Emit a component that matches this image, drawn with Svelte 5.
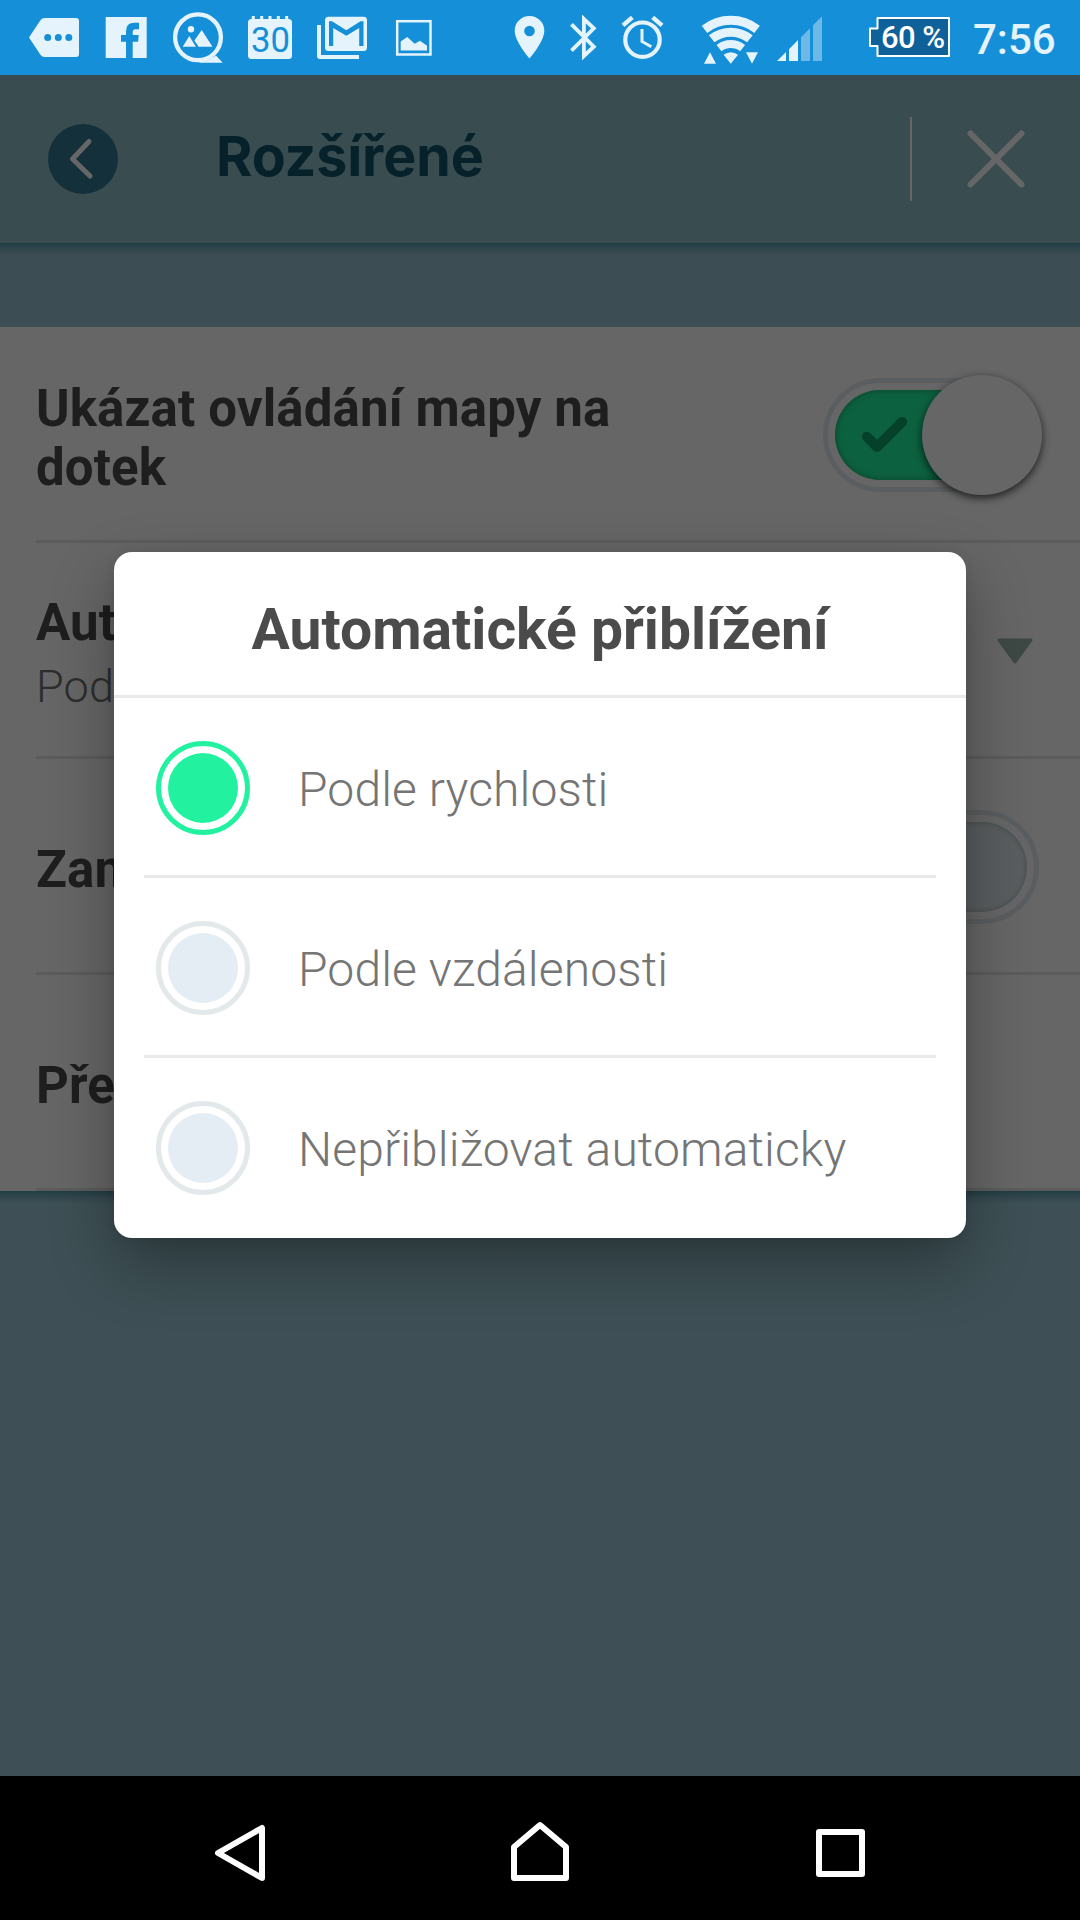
<script lang="ts">
  interface Option {
    id: string;
    label: string;
  }

  const options: Option[] = [
    { id: 'speed', label: 'Podle rychlosti' },
    { id: 'distance', label: 'Podle vzdálenosti' },
    { id: 'off', label: 'Nepřibližovat automaticky' }
  ];

  let selected = $state('speed');
  let showControls = $state(true);
</script>

<div class="screen">
  <div class="statusbar">
    <div class="notifications">
      <svg viewBox="0 0 72 75">
        <path d="M11 37.5 22.6 20q1.5-2 4-2H58q3 0 3 3v33q0 3-3 3H26.600q-2.500 0-4-2z" />
        <g class="cut">
          <circle cx="29.700" cy="37.500" r="3.500" />
          <circle cx="40.300" cy="37.500" r="3.500" />
          <circle cx="50.800" cy="37.500" r="3.500" />
        </g>
      </svg>
      <svg viewBox="0 0 72 75">
        <path d="M15.700 17h41v41h-41z" />
        <path class="cut" d="M36 58V41.700h-5V35h5v-4q0-8.300 8.500-8.300H49v6.600h-4q-2.300 0-2.300 2.500V35h6l-.6 6.700h-5.400V58z" />
      </svg>
      <svg viewBox="0 0 72 75">
        <circle class="line" cx="36" cy="37.300" r="22.900" stroke-width="4.300" />
        <path d="M36 62.700h24.700L54 55.500 46 60z" />
        <circle cx="29" cy="29.300" r="3.200" />
        <path d="m20.700 46.700 6.600-10.600 6.600 10.600zM36.600 46.700l-4.200-6.200L39.700 30l10.800 16.700z" />
      </svg>
      <svg viewBox="0 0 72 75">
        <rect x="14" y="19" width="44" height="40" rx="3.500" />
        <path class="line" stroke-width="3" d="M19.300 16v5M27.700 16v5M36 16v5M44.300 16v5M52.700 16v5" />
        <text class="cut day" x="17" y="52" textLength="39" lengthAdjust="spacingAndGlyphs">30</text>
      </svg>
      <svg viewBox="0 0 72 75">
        <rect x="19" y="16.700" width="42" height="34.300" rx="3.500" />
        <path d="M11 25h4v30h38v4H14q-3 0-3-3z" />
        <path class="cut" d="M23 46V21.200h3l14.300 9 14.200-9h3V46h-4.300V28L40.300 35.800 27.200 28v18z" />
      </svg>
      <svg viewBox="0 0 72 75">
        <rect class="line" x="19.200" y="21.200" width="33.300" height="33.300" stroke-width="2.500" />
        <path d="m22.700 41.500 6.600-4.500 7.400 6.700 5.300-3 7 5v4.900H22.700z" />
      </svg>
    </div>

    <div class="system">
      <svg viewBox="503 0 54 75" width="54">
        <path fill-rule="evenodd" d="M529.500 16a14.800 14.800 0 0 0-14.800 14.800c0 11 14.800 27.700 14.800 27.700s14.800-16.700 14.800-27.700A14.800 14.800 0 0 0 529.500 16zm0 9.700a5.300 5.300 0 1 1 0 10.600 5.300 5.300 0 0 1 0-10.600z" />
      </svg>
      <svg viewBox="557 0 54 75" width="54">
        <path class="line" stroke-width="3.800" d="m571.500 24.300 22.300 22.400-9.900 9.300V19l9.900 9.300-22.300 22.400" />
      </svg>
      <svg viewBox="611 0 63 75" width="63">
        <circle class="line" cx="642.500" cy="39.700" r="17.200" stroke-width="4.200" />
        <path class="line" stroke-width="4.400" d="m623 25.400 9.300-8M662 25.400l-9.300-8" />
        <path class="line" stroke-width="3" d="M642 29v12.500l9.300 5.300" />
      </svg>
      <svg viewBox="674 0 98 75" width="98">
        <path class="line" stroke-width="9" d="M704.500 29.400a42.800 42.800 0 0 1 52.600 0M711.700 38.700a31.100 31.100 0 0 1 38.200 0" />
        <path class="line" stroke-width="8" d="M719 48.100a19.200 19.200 0 0 1 23.600 0" />
        <path d="m730.800 63.700-7.200-9a11.400 11.400 0 0 1 14.400 0zM704 63.700l6-11.400 6 11.400zM746 52.300h12l-6 11.400z" />
      </svg>
      <svg viewBox="772 0 55 75" width="55">
        <path d="m777 61 9-9v9zM789 61V49.300l9-9.300v21z" />
        <path opacity="0.420" d="M801 61V37.300l9-9V61zM813 61V25.300l9-9V61z" />
      </svg>
      <svg class="battery" viewBox="863 0 92 75" width="92">
        <path d="M877.500 18H949v38h-71.500V46H870V28.500h7.500z" />
        <text x="881" y="48.200" textLength="64">60 %</text>
      </svg>
      <span class="clock">7:56</span>
    </div>
  </div>

  <main class="app">
    <header>
      <button class="back" aria-label="Zpět">
        <svg viewBox="0 0 70 70"><path d="M41 17.500 24.500 35 42 52" /></svg>
      </button>
      <h1>Rozšířené</h1>
      <button class="close" aria-label="Zavřít">
        <svg viewBox="0 0 60 60"><path d="m4.500 4.500 51 51M55.500 4.500l-51 51" /></svg>
      </button>
    </header>

    <section class="settings">
      <div class="row">
        <div class="name">Ukázat ovládání mapy na dotek</div>
        <button
          class="switch"
          class:on={showControls}
          aria-label="Ukázat ovládání"
          onclick={() => (showControls = !showControls)}
        >
          <span class="track">
            <svg viewBox="0 0 60 60"><path d="m15 29.700 10 10.300 25-25" /></svg>
          </span>
          <span class="thumb"></span>
        </button>
      </div>
      <div class="row">
        <div class="name">
          Automatické přiblížení
          <small>Podle rychlosti</small>
        </div>
        <svg class="arrow" viewBox="0 0 36 26"><path d="M2 2h32L18 24z" /></svg>
      </div>
      <div class="row">
        <div class="name">Zamknout</div>
        <span class="switch">
          <span class="track"></span>
          <span class="thumb"></span>
        </span>
      </div>
      <div class="row">
        <div class="name">Přehrát</div>
      </div>
    </section>

    <div class="overlay">
      <div class="dialog" role="dialog" aria-labelledby="dialog-title">
        <h2 id="dialog-title">Automatické přiblížení</h2>
        <div class="options">
          {#each options as option (option.id)}
            <label class="option" class:checked={selected === option.id}>
              <input type="radio" name="zoom" value={option.id} bind:group={selected} />
              <span class="radio"></span>
              <span class="label">{option.label}</span>
            </label>
          {/each}
        </div>
      </div>
    </div>
  </main>

  <nav class="navbar">
    <svg viewBox="0 0 70 70"><path d="M57 10v50L13 35z" /></svg>
    <svg viewBox="0 0 70 70"><path d="M9 60V29L35 7l26 22v31z" /></svg>
    <svg viewBox="0 0 70 70"><path d="M14 14h43v42H14z" /></svg>
  </nav>
</div>

<style>
  :global(body) {
    margin: 0;
    background: #000;
  }

  .screen {
    width: 1080px;
    height: 1920px;
    display: flex;
    flex-direction: column;
    overflow: hidden;
    font-family: Roboto, sans-serif;
  }

  h1,
  h2 {
    margin: 0;
  }

  button {
    padding: 0;
    border: 0;
    background: none;
  }

  /* status bar */
  .statusbar {
    height: 75px;
    flex-shrink: 0;
    display: flex;
    justify-content: space-between;
    padding: 0 23px 0 18px;
    background: #168fd9;
    color: #e4f3fc;
  }

  .notifications,
  .system {
    display: flex;
  }

  .statusbar svg {
    height: 75px;
    flex-shrink: 0;
    fill: #e4f3fc;
  }

  .notifications svg {
    width: 72px;
  }

  .statusbar .cut {
    fill: #168fd9;
  }

  .statusbar .line {
    fill: none;
    stroke: #e4f3fc;
  }

  .day {
    font-size: 35px;
  }

  .battery {
    margin-left: 36px;
  }

  .battery path {
    fill: #0f6199;
    stroke: #fff;
    stroke-width: 2;
    stroke-linejoin: round;
  }

  .battery text {
    fill: #fff;
    font-size: 31px;
    font-weight: 500;
  }

  .clock {
    width: 84px;
    margin-left: 18px;
    font-size: 42px;
    font-weight: 500;
    line-height: 79px;
    white-space: nowrap;
  }

  /* page */
  .app {
    position: relative;
    flex: 1;
    background: linear-gradient(#96c0cf, #9bc8d4 70%);
  }

  header {
    height: 168px;
    display: flex;
    align-items: center;
    padding: 0 54px 0 48px;
    background: #8ebec8;
  }

  header::after,
  .settings::after {
    content: '';
    position: absolute;
    left: 0;
    right: 0;
    top: 168px;
    height: 13px;
    background: linear-gradient(#5596a8, rgba(85, 150, 168, 0.5) 40%, rgba(120, 175, 190, 0));
  }

  .back {
    width: 70px;
    height: 70px;
    border-radius: 50%;
    background: #347b94;
  }

  .back svg,
  .close svg {
    display: block;
    fill: none;
    stroke: #fff;
    stroke-width: 5;
    stroke-linecap: round;
    stroke-linejoin: round;
  }

  h1 {
    flex: 1;
    margin: 0 0 6px 98px;
    color: #0f5369;
    font-family: Inter, sans-serif;
    font-size: 55.5px;
    font-weight: 700;
    letter-spacing: -0.1px;
    line-height: 70px;
  }

  .close {
    height: 84px;
    display: flex;
    align-items: center;
    padding-left: 54px;
    border-left: 2px solid #fff;
  }

  .close svg {
    width: 60px;
    height: 60px;
    stroke-width: 6;
  }

  .settings {
    margin-top: 84px;
    background: #fff;
  }

  .settings::after {
    top: 1116px;
  }

  .row {
    height: 213px;
    display: flex;
    align-items: center;
    justify-content: space-between;
    margin-left: 36px;
    padding-right: 41px;
    border-bottom: 3px solid #e6e6e6;
  }

  .name {
    width: 640px;
    padding-top: 8px;
    color: #4b4b4b;
    font-size: 51px;
    font-weight: 700;
    letter-spacing: 0.12px;
    line-height: 59px;
  }

  .name small {
    display: block;
    margin: 5px 0 -2px;
    font-size: 45px;
    font-weight: 300;
    color: #707070;
  }

  .switch {
    position: relative;
    box-sizing: border-box;
    width: 216px;
    height: 114px;
    margin-top: 3px;
    padding: 7px;
    border: 5px solid #e4ebef;
    border-radius: 57px;
  }

  .track {
    display: block;
    height: 90px;
    border-radius: 45px;
    background: #e2ecef;
    box-shadow: inset 0 0 6px rgba(0, 60, 60, 0.3);
  }

  .on .track {
    background: #20f2a0;
    box-shadow: inset 0 0 6px rgba(0, 80, 40, 0.5);
  }

  .track svg {
    display: block;
    width: 60px;
    height: 60px;
    padding: 17px 0 0 17px;
    fill: none;
    stroke: #0aa069;
    stroke-width: 10;
    stroke-linecap: round;
    stroke-linejoin: round;
  }

  .thumb {
    position: absolute;
    top: -8px;
    left: -8px;
    width: 120px;
    height: 120px;
    border-radius: 50%;
    background: #fff;
    box-shadow: 0 3px 8px rgba(0, 0, 0, 0.7);
  }

  .on .thumb {
    left: 94px;
  }

  .arrow {
    width: 36px;
    height: 26px;
    margin: 3px 6px 0 0;
    fill: #9bb4ad;
    stroke: #9bb4ad;
    stroke-width: 3;
    stroke-linejoin: round;
  }

  .overlay {
    position: absolute;
    inset: 0;
    z-index: 1;
    padding: 477px 114px 0;
    background: rgba(0, 0, 0, 0.6);
  }

  /* dialog */
  .dialog {
    height: 686px;
    border-radius: 18px;
    background: #fff;
    box-shadow: 0 26px 64px rgba(0, 0, 0, 0.33), 0 2px 12px rgba(0, 0, 0, 0.08);
  }

  h2 {
    height: 143px;
    border-bottom: 3px solid #e9e9e9;
    color: #4b4b4b;
    font-size: 57px;
    font-weight: 700;
    line-height: 156px;
    text-align: center;
  }

  .options {
    padding: 0 30px;
  }

  .option {
    box-sizing: border-box;
    height: 180px;
    display: flex;
    align-items: center;
    gap: 48px;
    padding-left: 12px;
    border-bottom: 3px solid #e9e9e9;
  }

  .option:last-child {
    border-bottom: 0;
    padding-bottom: 3px;
  }

  .option input {
    position: absolute;
    opacity: 0;
  }

  .radio {
    box-sizing: border-box;
    width: 94px;
    height: 94px;
    margin-top: 3px;
    padding: 7px;
    border: 5px solid #e3e9ea;
    border-radius: 50%;
  }

  .radio::before {
    content: '';
    display: block;
    height: 70px;
    border-radius: 50%;
    background: #e4edf3;
  }

  .checked .radio {
    border-color: #22f2a0;
  }

  .checked .radio::before {
    background: #22f2a0;
  }

  .label {
    margin-top: 7px;
    color: #757575;
    font-size: 48px;
    font-weight: 300;
    letter-spacing: 0.12px;
    line-height: 60px;
  }

  /* navigation bar */
  .navbar {
    height: 144px;
    flex-shrink: 0;
    display: flex;
    justify-content: space-between;
    padding: 42px 205px 0;
    box-sizing: border-box;
    background: #000;
  }

  .navbar svg {
    width: 70px;
    height: 70px;
    fill: none;
    stroke: #fff;
    stroke-width: 6;
    stroke-linejoin: round;
  }
</style>
